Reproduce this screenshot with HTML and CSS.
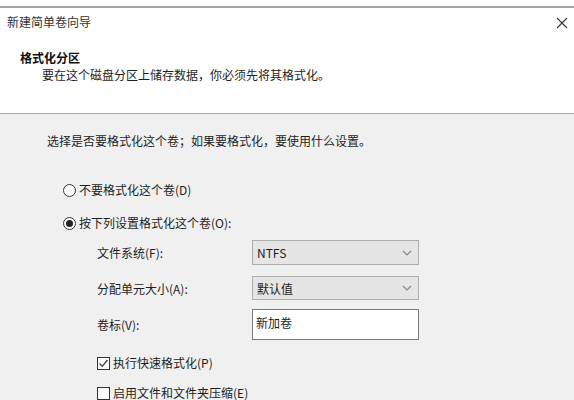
FILE: index.html
```html
<!DOCTYPE html>
<html lang="zh-CN">
<head>
<meta charset="utf-8">
<link rel="stylesheet" href="styles.css">
</head>
<body>
<div class="window">
  <div class="topline"></div>
  <div class="header">
    <div class="titlebar">
      <span class="title">新建简单卷向导</span>
      <svg class="close" width="12" height="12" viewBox="0 0 12 12"><path d="M1 1L11 11M11 1L1 11" stroke="#333" stroke-width="1.1" fill="none"/></svg>
    </div>
    <div class="heading">格式化分区</div>
    <div class="subheading">要在这个磁盘分区上储存数据，你必须先将其格式化。</div>
  </div>
  <div class="content">
    <div class="instruction">选择是否要格式化这个卷；如果要格式化，要使用什么设置。</div>
    <div class="option first">
      <span class="radio"></span>
      <span>不要格式化这个卷(D)</span>
    </div>
    <div class="option second">
      <span class="radio checked"></span>
      <span>按下列设置格式化这个卷(O):</span>
    </div>
    <div class="form">
      <div class="label r1">文件系统(F):</div>
      <div class="select r1"><span>NTFS</span><svg width="10" height="6" viewBox="0 0 10 6"><path d="M1 1L5 5L9 1" stroke="#888" stroke-width="1.2" fill="none"/></svg></div>
      <div class="label r2">分配单元大小(A):</div>
      <div class="select r2"><span>默认值</span><svg width="10" height="6" viewBox="0 0 10 6"><path d="M1 1L5 5L9 1" stroke="#888" stroke-width="1.2" fill="none"/></svg></div>
      <div class="label r3">卷标(V):</div>
      <div class="textbox r3">新加卷</div>
    </div>
    <div class="check first">
      <span class="box"><svg width="11" height="11" viewBox="0 0 11 11"><path d="M1.5 5.5L4.2 8.3L9.5 2" stroke="#333" stroke-width="1.2" fill="none"/></svg></span>
      <span>执行快速格式化(P)</span>
    </div>
    <div class="check second">
      <span class="box"></span>
      <span>启用文件和文件夹压缩(E)</span>
    </div>
  </div>
</div>
</body>
</html>
```

FILE: styles.css
```css
html, body {
  margin: 0;
  padding: 0;
}
body {
  width: 574px;
  height: 400px;
  overflow: hidden;
  font-family: "Noto Sans CJK SC", "Noto Sans", sans-serif;
  font-size: 12px;
  color: #1e1e1e;
  background: #f0f0f0;
}
.window {
  display: flex;
  flex-direction: column;
  height: 400px;
}
.topline {
  flex-shrink: 0;
  height: 6px;
  background: #fff;
  border-bottom: 2px solid #a6a6a6;
}
.header {
  flex-shrink: 0;
  background: #fff;
  height: 105px;
  border-bottom: 1px solid #a8a8a8;
  display: flex;
  flex-direction: column;
}
.titlebar {
  display: flex;
  justify-content: space-between;
  align-items: center;
  height: 16px;
  line-height: 16px;
  margin-top: 6px;
  padding-left: 7px;
  padding-right: 7px;
  color: #333;
}
.close {
  margin-top: 2px;
  margin-right: -1px;
}
.heading {
  font-weight: bold;
  line-height: 16px;
  margin-top: 20px;
  padding-left: 20px;
  color: #111;
}
.subheading {
  line-height: 16px;
  margin-top: 1px;
  padding-left: 42px;
}
.content {
  flex: 1;
  display: flex;
  flex-direction: column;
  background: #f0f0f0;
}
.instruction {
  flex-shrink: 0;
  line-height: 16px;
  margin-top: 19px;
  padding-left: 47px;
}
.option {
  flex-shrink: 0;
  display: flex;
  align-items: center;
  gap: 3px;
  height: 16px;
  line-height: 16px;
  padding-left: 63px;
}
.option.first { margin-top: 33px; }
.option.second { margin-top: 17px; }
.radio {
  width: 11px;
  height: 11px;
  border: 1px solid #333;
  border-radius: 50%;
  background: #fff;
  display: flex;
  align-items: center;
  justify-content: center;
}
.radio.checked::after {
  content: "";
  width: 7px;
  height: 7px;
  border-radius: 50%;
  background: #222;
}
.form {
  flex-shrink: 0;
  display: grid;
  grid-template-columns: 155px 167px;
  grid-template-rows: 25px 25px 30px;
  row-gap: 10px;
  margin-top: 9px;
  padding-left: 97px;
}
.form .r2 { margin-top: 1px; }
.form .r3 { margin-top: -1px; }
.label {
  display: flex;
  align-items: center;
}
.select {
  display: flex;
  align-items: center;
  justify-content: space-between;
  background: #e5e5e5;
  border: 1px solid #adadad;
  padding: 0 6px 0 4px;
}
.textbox {
  display: flex;
  align-items: center;
  background: #fff;
  border: 1px solid #7a7a7a;
  padding: 0 3px 4px;
}
.check {
  flex-shrink: 0;
  display: flex;
  align-items: center;
  gap: 3px;
  height: 16px;
  line-height: 16px;
  padding-left: 97px;
}
.check.first { margin-top: 15px; }
.check.second { margin-top: 14px; }
.box {
  width: 11px;
  height: 11px;
  border: 1px solid #333;
  background: #fff;
  display: flex;
  align-items: center;
  justify-content: center;
}
```
